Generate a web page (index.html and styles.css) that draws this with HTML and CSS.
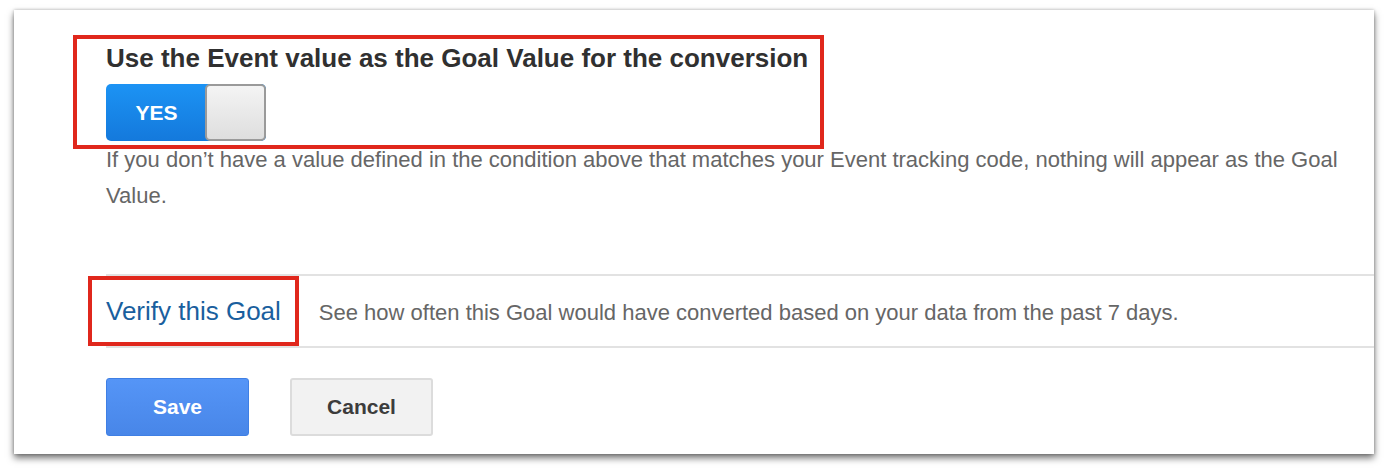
FILE: index.html
```html
<!DOCTYPE html>
<html>
<head>
<meta charset="utf-8">
<link rel="stylesheet" href="styles.css">
</head>
<body>
<div class="card">
  <div class="content">
    <h2 class="title">Use the Event value as the Goal Value for the conversion</h2>
    <div class="toggle">
      <span class="toggle-on">YES</span>
      <span class="toggle-knob"></span>
    </div>
    <p class="desc">If you don’t have a value defined in the condition above that matches your Event tracking code, nothing will appear as the Goal Value.</p>
    <div class="verify-row">
      <a class="verify-link">Verify this Goal</a>
      <span class="verify-text">See how often this Goal would have converted based on your data from the past 7 days.</span>
    </div>
    <div class="actions">
      <button class="btn btn-save">Save</button>
      <button class="btn btn-cancel">Cancel</button>
    </div>
  </div>
  <div class="mark mark-top"></div>
  <div class="mark mark-verify"></div>
</div>
</body>
</html>
```
FILE: styles.css
```css
html, body {
  margin: 0;
  padding: 0;
  background: #ffffff;
}
body {
  padding: 10px 14px 18px 14px;
  min-height: 472px;
  box-sizing: border-box;
  font-family: "Liberation Sans", Arial, sans-serif;
}
.card {
  position: relative;
  width: 1360px;
  height: 444px;
  background: #ffffff;
  box-shadow: 0 4px 7px rgba(0,0,0,0.55), 0 0 3px rgba(0,0,0,0.25);
  box-sizing: border-box;
}
.content {
  padding: 33px 0 0 92px;
}
.title {
  margin: 0;
  font-size: 26px;
  line-height: 30px;
  font-weight: bold;
  color: #303030;
}
.toggle {
  margin-top: 11px;
  width: 160px;
  height: 57px;
  display: flex;
  border-radius: 5px;
  background: linear-gradient(#1c93f4, #1479dc);
  box-sizing: border-box;
}
.toggle-on {
  width: 97px;
  display: flex;
  align-items: center;
  justify-content: center;
  color: #ffffff;
  font-weight: bold;
  font-size: 21px;
  padding-left: 2px;
}
.toggle-knob {
  flex: 1;
  border: 2px solid #9a9a9a;
  border-radius: 5px;
  background: linear-gradient(#f4f4f4, #dedede);
}
.desc {
  margin: 1px 0 0 0;
  font-size: 22px;
  line-height: 36px;
  color: #666666;
}
.verify-row {
  margin-top: 60px;
  height: 70px;
  border-top: 2px solid #e2e2e2;
  border-bottom: 2px solid #e2e2e2;
  display: flex;
  align-items: baseline;
  line-height: 70px;
}
.verify-link {
  font-size: 26px;
  color: #1a5f9e;
  margin-right: 38px;
}
.verify-text {
  font-size: 22px;
  color: #666666;
}
.actions {
  margin-top: 30px;
  display: flex;
  gap: 41px;
}
.btn {
  width: 143px;
  height: 58px;
  border-radius: 3px;
  font-family: "Liberation Sans", Arial, sans-serif;
  font-size: 21px;
  font-weight: bold;
  box-sizing: border-box;
  padding: 0;
}
.btn-save {
  background: linear-gradient(#5595f7, #4886e8);
  border: 1px solid #3f7fe4;
  color: #ffffff;
}
.btn-cancel {
  background: #f2f2f2;
  border: 2px solid #dcdcdc;
  color: #3c3c3c;
}
.mark {
  position: absolute;
  border: 4px solid #e0271c;
  box-sizing: border-box;
}
.mark-top {
  left: 59px;
  top: 25px;
  width: 751px;
  height: 114px;
}
.mark-verify {
  left: 74px;
  top: 266px;
  width: 211px;
  height: 70px;
}
```
